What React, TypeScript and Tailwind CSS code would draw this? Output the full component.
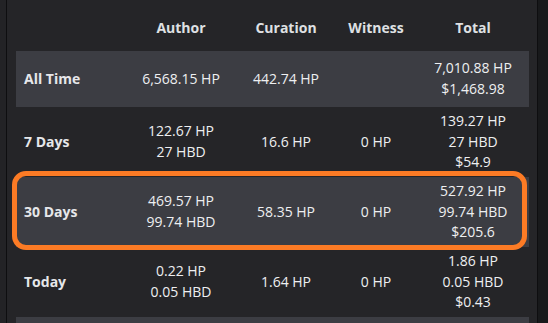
const rows = [
  { label: 'All Time', author: ['6,568.15 HP'], curation: ['442.74 HP'], witness: [], total: ['7,010.88 HP', '$1,468.98'], shaded: true },
  { label: '7 Days', author: ['122.67 HP', '27 HBD'], curation: ['16.6 HP'], witness: ['0 HP'], total: ['139.27 HP', '27 HBD', '$54.9'] },
  { label: '30 Days', author: ['469.57 HP', '99.74 HBD'], curation: ['58.35 HP'], witness: ['0 HP'], total: ['527.92 HP', '99.74 HBD', '$205.6'], shaded: true, marked: true },
  { label: 'Today', author: ['0.22 HP', '0.05 HBD'], curation: ['1.64 HP'], witness: ['0 HP'], total: ['1.86 HP', '0.05 HBD', '$0.43'] },
];

const cols = 'grid grid-cols-[109px_112px_98px_82px_112px]';

function Cell({ lines }: { lines: string[] }) {
  return (
    <div className="flex flex-col items-center text-center">
      {lines.map((l, i) => <span key={i}>{l}</span>)}
    </div>
  );
}

export default function App() {
  return (
    <div
      className="w-[548px] h-[323px] overflow-hidden flex bg-[#222225] text-[14px] leading-[20.67px] text-[#eeeff1]"
      style={{ fontFamily: '"Open Sans", "Noto Sans", sans-serif' }}
    >
      <div className="w-[6px] shrink-0 bg-[#232326]" />
      <div className="w-px shrink-0 bg-[#0e0e10]" />
      <div className="w-[530px] shrink-0 bg-[#252528] pl-[9px] pr-[8px]">
        {/* header */}
        <div className={`${cols} h-[51px] pt-[18px] font-bold text-[#dfe0e3]`}>
          <div />
          <div className="text-center">Author</div>
          <div className="text-center">Curation</div>
          <div className="text-center">Witness</div>
          <div className="text-center">Total</div>
        </div>

        {rows.map((r) => (
          <div
            key={r.label}
            className={`relative ${cols} items-center min-h-[56px] py-1 ${r.shaded ? 'bg-[#3c3d43]' : ''}`}
          >
            <div className="pl-2 font-bold text-[#e6e7ea]">{r.label}</div>
            <Cell lines={r.author} />
            <Cell lines={r.curation} />
            <Cell lines={r.witness} />
            <Cell lines={r.total} />
            {r.marked && (
              <div className="absolute left-[-4px] right-[2px] top-[-6px] bottom-[-3px] border-[5px] border-[#fc7b25] rounded-[14px] pointer-events-none" />
            )}
          </div>
        ))}
        <div className="h-[40px] bg-[#3c3d43]" />
      </div>
      <div className="w-px shrink-0 bg-[#0e0e10]" />
      <div className="flex-1 bg-[#18191b]" />
    </div>
  );
}
